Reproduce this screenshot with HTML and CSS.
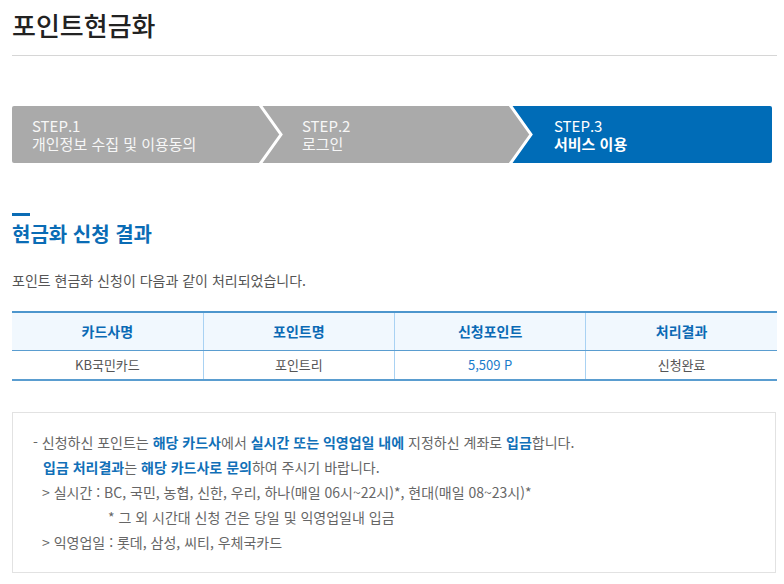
FILE: index.html
```html
<!DOCTYPE html>
<html lang="ko">
<head>
<meta charset="utf-8">
<title>포인트현금화</title>
<link rel="stylesheet" href="styles.css">
</head>
<body>
<div class="page">
  <header class="page-head">
    <h1 class="page-title">포인트현금화</h1>
  </header>

  <ol class="steps">
    <li class="step">
      <span class="step-num">STEP.1</span>
      <span class="step-name">개인정보 수집 및 이용동의</span>
      <svg class="chev" width="30" height="57" viewBox="0 0 30 57"><polygon points="0,0 4,0 25,28.5 4,57 0,57" fill="#aaaaaa"/><polyline points="4,-1 25,28.5 4,58" fill="none" stroke="#fff" stroke-width="3"/></svg>
    </li>
    <li class="step">
      <span class="step-num">STEP.2</span>
      <span class="step-name">로그인</span>
      <svg class="chev" width="30" height="57" viewBox="0 0 30 57"><polygon points="0,0 4,0 25,28.5 4,57 0,57" fill="#aaaaaa"/><polyline points="4,-1 25,28.5 4,58" fill="none" stroke="#fff" stroke-width="3"/></svg>
    </li>
    <li class="step step-on">
      <span class="step-num">STEP.3</span>
      <span class="step-name">서비스 이용</span>
    </li>
  </ol>

  <section class="result">
    <h2 class="sec-title">현금화 신청 결과</h2>
    <p class="desc">포인트 현금화 신청이 다음과 같이 처리되었습니다.</p>

    <table class="tbl">
      <thead>
        <tr><th>카드사명</th><th>포인트명</th><th>신청포인트</th><th>처리결과</th></tr>
      </thead>
      <tbody>
        <tr><td>KB국민카드</td><td>포인트리</td><td class="pt">5,509 P</td><td>신청완료</td></tr>
      </tbody>
    </table>

    <div class="notice">
      <p class="n-line">- 신청하신 포인트는 <b>해당 카드사</b>에서 <b>실시간 또는 익영업일 내에</b> 지정하신 계좌로 <b>입금</b>합니다.</p>
      <p class="n-line n-ind"><b>입금 처리결과</b>는 <b>해당 카드사로 문의</b>하여 주시기 바랍니다.</p>
      <p class="n-line n-sub">&gt; 실시간 : BC, 국민, 농협, 신한, 우리, 하나(매일 06시~22시)*, 현대(매일 08~23시)*</p>
      <p class="n-line n-star">* 그 외 시간대 신청 건은 당일 및 익영업일내 입금</p>
      <p class="n-line n-sub">&gt; 익영업일 : 롯데, 삼성, 씨티, 우체국카드</p>
    </div>
  </section>
</div>
</body>
</html>
```

FILE: styles.css
```css
* { box-sizing: border-box; }
html, body { margin: 0; padding: 0; background: #fff; }
body {
  font-family: "Noto Sans CJK KR", "Noto Sans", "Liberation Sans", sans-serif;
  color: #555;
}
.page { padding: 0 7px 0 12px; }

.page-head {
  padding: 7px 0 12px;
  border-bottom: 1px solid #d6d6d6;
}
.page-title {
  margin: 0;
  font-size: 26px;
  line-height: 36px;
  font-weight: 500;
  color: #222;
}

.steps {
  list-style: none;
  margin: 50px 5px 0 0;
  padding: 0;
  display: flex;
  height: 57px;
  border-radius: 2px;
  overflow: hidden;
}
.step {
  position: relative;
  background: #aaaaaa;
  color: #f7f7f7;
  display: flex;
  flex-direction: column;
  justify-content: center;
  font-size: 15px;
  line-height: 18px;
}
.step:nth-child(1) { width: 248px; padding-left: 20px; }
.step:nth-child(2) { width: 250px; padding-left: 42px; }
.step-on { flex: 1; background: #006cb7; padding-left: 44px; color: #fff; }
.step-on .step-name { font-weight: 700; }
.chev {
  position: absolute;
  top: 0;
  left: calc(100% - 4px);
  z-index: 1;
}

.result { padding-top: 50px; }
.sec-title {
  margin: 0;
  font-size: 20px;
  line-height: 28px;
  font-weight: 700;
  color: #0a6cb5;
}
.sec-title::before {
  content: "";
  display: block;
  width: 18px;
  height: 3px;
  background: #0a6cb5;
  margin-bottom: 4px;
}
.desc {
  margin: 22px 0 0;
  font-size: 14px;
  line-height: 20px;
  color: #555;
}

.tbl {
  width: 100%;
  margin-top: 21px;
  border-collapse: collapse;
  table-layout: fixed;
  border-top: 2px solid #4d96cd;
  border-bottom: 2px solid #5a9dd0;
  font-size: 13px;
}
.tbl th, .tbl td {
  text-align: center;
  border-left: 1px solid #a9d2f3;
}
.tbl th:first-child, .tbl td:first-child { border-left: 0; }
.tbl th {
  background: #f1f8fe;
  color: #0a6ab5;
  font-size: 14px;
  font-weight: 700;
  height: 38px;
  border-bottom: 1px solid #5a9dd0;
}
.tbl td {
  height: 30px;
  color: #555;
}
.tbl td.pt { color: #1a7bcb; }

.notice {
  margin: 31px 1px 0 0;
  border: 1px solid #e2e2e2;
  padding: 17px 20px 17px 20px;
  font-size: 14px;
  line-height: 25px;
  color: #666;
}
.n-line { margin: 0; }
.n-line b { color: #1170b8; font-weight: 700; }
.n-ind { padding-left: 10px; }
.n-sub { padding-left: 9px; }
.n-star { padding-left: 75px; }
```
